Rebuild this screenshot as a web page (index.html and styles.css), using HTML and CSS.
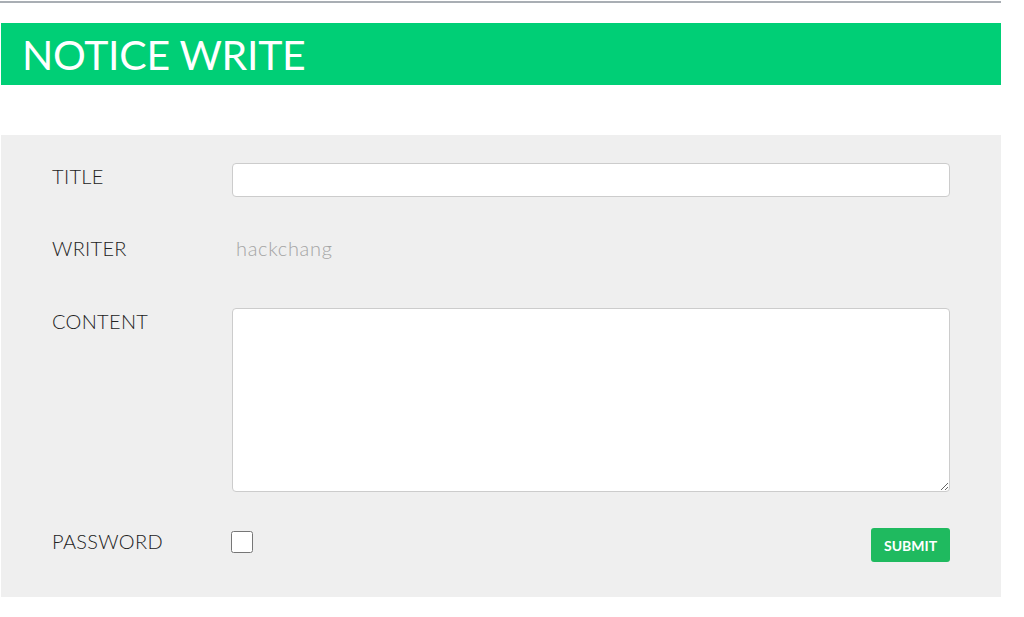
FILE: index.html
```html
<!DOCTYPE html>
<html lang="ko">
<head>
  <meta charset="UTF-8">
  <title>NOTICE WRITE</title>
  <link rel="stylesheet" href="styles.css">
</head>
<body>
  <div class="wrap">
    <hr class="top-line">
    <h1 class="page-title">NOTICE WRITE</h1>

    <form class="write-form">
      <div class="row title-row">
        <label class="row-label" for="title">TITLE</label>
        <input type="text" id="title" class="text-input">
      </div>

      <div class="row writer-row">
        <span class="row-label">WRITER</span>
        <span class="writer-name">hackchang</span>
      </div>

      <div class="row content-row">
        <label class="row-label" for="content">CONTENT</label>
        <textarea id="content" class="text-area"></textarea>
      </div>

      <div class="row password-row">
        <label class="row-label" for="secret">PASSWORD</label>
        <input type="checkbox" id="secret" class="check">
        <button type="submit" class="submit-btn">SUBMIT</button>
      </div>
    </form>
  </div>
</body>
</html>
```

FILE: styles.css
```css
body {
  margin: 0;
  padding: 0;
  background-color: #fff;
  font-family: 'Lato', 'Open Sans', sans-serif;
  color: #333;
}

.wrap {
  width: 1000px;
  margin-left: 1px;
}

.top-line {
  margin: 1px 0 0 -1px;
  border: none;
  height: 2px;
  background-color: #a9aeb4;
}

.page-title {
  margin: 20px 0 50px;
  height: 62px;
  padding-left: 21px;
  background-color: #00cf76;
  color: #fff;
  font-size: 41px;
  font-weight: 400;
  line-height: 64px;
  letter-spacing: -0.3px;
}

.write-form {
  background-color: #efefef;
  padding: 28px 51px 35px 51px;
}

.row {
  display: grid;
  grid-template-columns: 180px 1fr;
  align-items: start;
}

.row-label {
  font-size: 20px;
  font-weight: 300;
  line-height: 27px;
  letter-spacing: 0.3px;
  color: #222;
}

.title-row {
  margin-bottom: 38px;
}

.writer-row {
  margin-bottom: 46px;
}

.content-row {
  margin-bottom: 36px;
}

.text-input,
.text-area {
  box-sizing: border-box;
  width: 100%;
  border: 1px solid #ccc;
  border-radius: 4px;
  background-color: #fff;
  font-size: 16px;
  margin: 0;
}

.text-input {
  height: 34px;
}

.text-area {
  height: 184px;
  resize: vertical;
}

.writer-name {
  padding-left: 4px;
  font-size: 20px;
  font-weight: 300;
  line-height: 27px;
  letter-spacing: 0.7px;
  color: #a4a4a4;
}

.password-row {
  grid-template-columns: 180px 1fr auto;
}

.check {
  width: 22px;
  height: 22px;
  margin: 3px 0 0 -1px;
}

.submit-btn {
  height: 34px;
  width: 79px;
  border: none;
  border-radius: 3px;
  background-color: #1fba5f;
  color: #fff;
  font-family: 'Lato', sans-serif;
  font-size: 14px;
  font-weight: 700;
  cursor: pointer;
}
```
